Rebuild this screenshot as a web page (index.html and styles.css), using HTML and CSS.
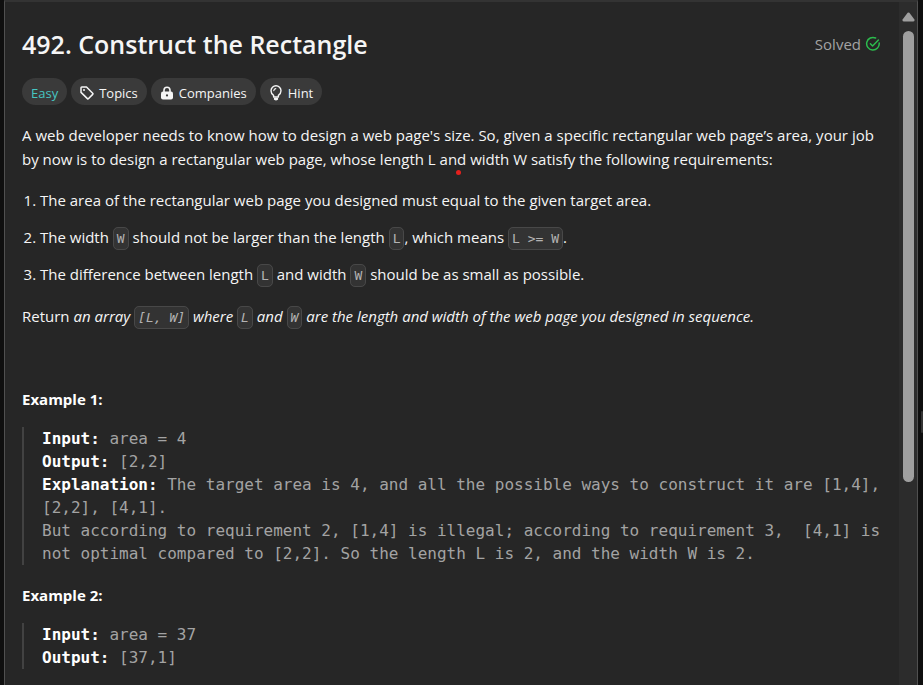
FILE: index.html
```html
<!DOCTYPE html>
<html lang="en">
<head>
<meta charset="utf-8">
<title>492. Construct the Rectangle</title>
<link rel="stylesheet" href="styles.css">
</head>
<body>
<div class="panel">
  <main class="content">
    <header class="head">
      <h1>492. Construct the Rectangle</h1>
      <div class="solved">Solved
        <svg width="16" height="16" viewBox="0 0 16 16" fill="none" stroke="#2cbb4d" stroke-width="1.5" stroke-linecap="round" stroke-linejoin="round"><path d="M10.6 2A6.3 6.3 0 1 0 14.2 7"/><path d="M5.4 7.7l2.2 2.3L13.4 4"/></svg>
      </div>
    </header>
    <div class="tags">
      <span class="tag easy">Easy</span>
      <button class="tag" type="button"><svg width="14" height="14" viewBox="0 0 14 14"><path d="M1 1.8Q1 1 1.8 1H6.5L12.7 7.2Q13.3 7.8 12.7 8.4L8.6 12.6Q8 13.2 7.4 12.6L1 6.4Z" fill="none" stroke="#f5f5f5" stroke-width="1.5" stroke-linejoin="round"/><circle cx="4" cy="4" r="1" fill="#f5f5f5"/></svg>Topics</button>
      <button class="tag" type="button"><svg width="14" height="14" viewBox="0 0 14 14"><path d="M4 6V4.2a3 3 0 0 1 6 0V6" fill="none" stroke="#f5f5f5" stroke-width="1.6"/><rect x="1" y="5.4" width="12" height="8.2" rx="2" fill="#f5f5f5"/><circle cx="7" cy="9.4" r="1.1" fill="#3a3a3a"/></svg>Companies</button>
      <button class="tag" type="button"><svg width="14" height="16" viewBox="0 0 14 16" fill="none" stroke="#f5f5f5" stroke-width="1.4" stroke-linecap="round" stroke-linejoin="round"><path d="M4.6 12V10.4Q2 8.6 2 5.8a5 5 0 0 1 10 0Q12 8.6 9.4 10.4V12Z"/><path d="M4.8 5.6A2.3 2.3 0 0 1 6.8 3.6" stroke-width="1.1"/><path d="M5.6 13.5H8.4V14.2Q7 15.4 5.6 14.2Z" fill="#f5f5f5"/></svg>Hint</button>
    </div>
    <p class="intro">A web developer needs to know how to design a web page's size. So, given a specific rectangular web page’s area, your job by now is to design a rectangular web page, whose length L <span class="marked">and</span> width W satisfy the following requirements:</p>
    <ol class="rules">
      <li>The area of the rectangular web page you designed must equal to the given target area.</li>
      <li>The width <code>W</code> should not be larger than the length <code>L</code>, which means <code>L &gt;= W</code>.</li>
      <li>The difference between length <code>L</code> and width <code>W</code> should be as small as possible.</li>
    </ol>
    <p class="result">Return <em>an array <code>[L, W]</code> where <code>L</code> and <code>W</code> are the length and width of the web page you designed in sequence.</em></p>
    <h2>Example 1:</h2>
    <pre><b>Input:</b> area = 4
<b>Output:</b> [2,2]
<b>Explanation:</b> The target area is 4, and all the possible ways to construct it are [1,4], [2,2], [4,1].
But according to requirement 2, [1,4] is illegal; according to requirement 3,  [4,1] is not optimal compared to [2,2]. So the length L is 2, and the width W is 2.</pre>
    <h2>Example 2:</h2>
    <pre><b>Input:</b> area = 37
<b>Output:</b> [37,1]</pre>
  </main>
  <div class="scrollbar" aria-hidden="true">
    <svg class="arrow" width="13" height="10" viewBox="0 0 13 10"><path d="M5.6 .8Q6.5 0 7.4 .8L12.4 7.6Q13 9.6 11.4 9.6H1.6Q0 9.6 .6 7.6Z" fill="#9f9f9f"/></svg>
    <div class="thumb"></div>
  </div>
</div>
<div class="gutter"><div class="grip"></div></div>
</body>
</html>
```
FILE: styles.css
```css
* { box-sizing: border-box; }
body {
  margin: 0;
  height: 100vh;
  padding-left: 4px;
  display: flex;
  overflow: hidden;
  background: #0f0f0f;
  color: #f5f5f5;
  font: 15px/24px "Open Sans", "Noto Sans", sans-serif;
}
.panel {
  flex: 1;
  min-width: 0;
  display: flex;
  background: #262626;
  border: 1px solid #505050;
  border-top: 2px solid #333;
  border-bottom: 0;
}
.content { flex: 1; min-width: 0; padding: 26px 18px 0 17px; }
.head { display: flex; justify-content: space-between; align-items: center; }
h1 { margin: 0; font-size: 25px; line-height: 32px; font-weight: 600; }
.solved { display: flex; align-items: center; gap: 4px; color: #a3a3a3; }
.tags { display: flex; gap: 4px; margin-top: 18px; }
.tag {
  display: flex;
  align-items: center;
  gap: 5px;
  height: 27px;
  padding: 2px 9px 0;
  border: 0;
  border-radius: 14px;
  background: #3a3a3a;
  color: #f5f5f5;
  font: 13px/20px "Open Sans", "Noto Sans", sans-serif;
}
.easy { color: #46c6c2; }
p { margin: 0; }
.intro { margin-top: 18px; }
.marked { position: relative; }
.marked::after {
  content: "";
  position: absolute;
  left: 60%;
  top: 21px;
  width: 5px;
  height: 5px;
  border-radius: 50%;
  background: #e5201d;
}
.rules { margin: 17px 0 0; padding-left: 18px; display: grid; gap: 13px; }
code {
  padding: 3px;
  border: 1px solid #484848;
  border-radius: 5px;
  background: #333;
  color: #b3b3b3;
  font-family: "DejaVu Sans Mono", monospace;
  font-size: 13px;
  line-height: 16px;
}
.result { margin-top: 18px; }
h2 { margin: 0; font-size: 15px; line-height: 24px; font-weight: 700; color: #fff; }
.result + h2 { margin-top: 59px; }
pre {
  margin: 16px 0 18px;
  padding-left: 18px;
  border-left: 2px solid #424242;
  color: #a3a3a3;
  font: 16px/23px "DejaVu Sans Mono", monospace;
  white-space: pre-wrap;
}
pre b { color: #fff; }
.scrollbar {
  width: 18px;
  padding-top: 10px;
  display: flex;
  flex-direction: column;
  align-items: center;
  gap: 9px;
  background: #2c2c2c;
}
.arrow { flex: none; }
.thumb { width: 11px; height: 67%; border-radius: 6px; background: #9f9f9f; }
.gutter { width: 5px; display: flex; align-items: center; justify-content: flex-end; }
.grip { width: 2px; height: 22px; margin-top: 158px; background: #333; border-radius: 1px; }
```
